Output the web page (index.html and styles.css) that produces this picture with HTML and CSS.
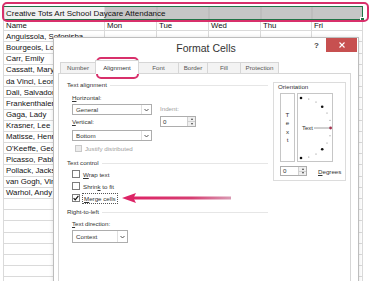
FILE: index.html
```html
<!DOCTYPE html>
<html lang="en">
<head>
    <meta charset="UTF-8">
    <meta name="viewport" content="width=device-width, initial-scale=1.0">
    <title>Format Cells - Merge cells</title>
    <link rel="stylesheet" href="styles.css">
</head>
<body>
    <table class="sheet">
        <colgroup>
            <col class="col-name">
            <col class="col-day"><col class="col-day"><col class="col-day">
            <col class="col-day-s"><col class="col-day-s">
        </colgroup>
        <tr class="title-row">
            <td colspan="6" class="merged">Creative Tots Art School Daycare Attendance<span class="fill-handle"></span></td>
        </tr>
        <tr><td>Name</td><td>Mon</td><td>Tue</td><td>Wed</td><td>Thu</td><td>Fri</td></tr>
        <tr><td>Anguissola, Sofonisba</td><td></td><td></td><td></td><td></td><td></td></tr>
        <tr><td>Bourgeois, Louise</td><td></td><td></td><td></td><td></td><td></td></tr>
        <tr><td>Carr, Emily</td><td></td><td></td><td></td><td></td><td></td></tr>
        <tr><td>Cassatt, Mary</td><td></td><td></td><td></td><td></td><td></td></tr>
        <tr><td>da Vinci, Leonardo</td><td></td><td></td><td></td><td></td><td></td></tr>
        <tr><td>Dali, Salvador</td><td></td><td></td><td></td><td></td><td></td></tr>
        <tr><td>Frankenthaler, Helen</td><td></td><td></td><td></td><td></td><td></td></tr>
        <tr><td>Gaga, Lady</td><td></td><td></td><td></td><td></td><td></td></tr>
        <tr><td>Krasner, Lee</td><td></td><td></td><td></td><td></td><td></td></tr>
        <tr><td>Matisse, Henri</td><td></td><td></td><td></td><td></td><td></td></tr>
        <tr><td>O'Keeffe, Georgia</td><td></td><td></td><td></td><td></td><td></td></tr>
        <tr><td>Picasso, Pablo</td><td></td><td></td><td></td><td></td><td></td></tr>
        <tr><td>Pollack, Jackson</td><td></td><td></td><td></td><td></td><td></td></tr>
        <tr><td>van Gogh, Vincent</td><td></td><td></td><td></td><td></td><td></td></tr>
        <tr><td>Warhol, Andy</td><td></td><td></td><td></td><td></td><td></td></tr>
        <tr><td></td><td></td><td></td><td></td><td></td><td></td></tr>
        <tr><td></td><td></td><td></td><td></td><td></td><td></td></tr>
        <tr><td></td><td></td><td></td><td></td><td></td><td></td></tr>
        <tr><td></td><td></td><td></td><td></td><td></td><td></td></tr>
        <tr><td></td><td></td><td></td><td></td><td></td><td></td></tr>
        <tr><td></td><td></td><td></td><td></td><td></td><td></td></tr>
        <tr><td></td><td></td><td></td><td></td><td></td><td></td></tr>
        <tr><td></td><td></td><td></td><td></td><td></td><td></td></tr>
    </table>

    <div class="dialog">
        <div class="titlebar">
            <span></span>
            <h1 class="title">Format Cells</h1>
            <div class="win-btns">
                <span class="help">?</span>
                <span class="close">
                    <svg width="6" height="6" viewBox="0 0 6 6"><path d="M0.5 0.5 L5.5 5.5 M5.5 0.5 L0.5 5.5" stroke="#fff" stroke-width="1.1"/></svg>
                </span>
            </div>
        </div>

        <div class="tabs">
            <span class="tab tab-number">Number</span>
            <span class="tab tab-align active">Alignment</span>
            <span class="tab tab-font">Font</span>
            <span class="tab tab-border">Border</span>
            <span class="tab tab-fill">Fill</span>
            <span class="tab tab-protect">Protection</span>
        </div>

        <div class="panel">
            <div class="left-col">
                <div class="group-title">Text alignment</div>
                <div class="align-grid">
                    <div>
                        <div class="field-label first"><u>H</u>orizontal:</div>
                        <div class="select sel-general">
                            <span>General</span>
                            <i class="drop"><svg width="5" height="4" viewBox="0 0 5 4"><path d="M0.5 1 L2.5 3 L4.5 1" fill="none" stroke="#444" stroke-width="0.9"/></svg></i>
                        </div>
                        <div class="field-label vert"><u>V</u>ertical:</div>
                        <div class="select sel-bottom">
                            <span>Bottom</span>
                            <i class="drop"><svg width="5" height="4" viewBox="0 0 5 4"><path d="M0.5 1 L2.5 3 L4.5 1" fill="none" stroke="#444" stroke-width="0.9"/></svg></i>
                        </div>
                    </div>
                    <div>
                        <div class="field-label indent-label">Indent:</div>
                        <div class="num indent-num">
                            <span>0</span>
                            <i class="spin"><b class="up"></b><b class="down"></b></i>
                        </div>
                    </div>
                </div>
                <div class="check-row justify">
                    <span class="box disabled"></span>
                    <span class="muted">Justify distributed</span>
                </div>

                <div class="group-title tc">Text control</div>
                <div class="check-row">
                    <span class="box"></span>
                    <span><u>W</u>rap text</span>
                </div>
                <div class="check-row">
                    <span class="box"></span>
                    <span>Shrin<u>k</u> to fit</span>
                </div>
                <div class="check-row">
                    <span class="box">
                        <svg width="6" height="6" viewBox="0 0 6 6"><path d="M0.6 3.2 L2.2 4.8 L5.4 0.9" fill="none" stroke="#111" stroke-width="1.2"/></svg>
                    </span>
                    <span class="focus"><u>M</u>erge cells</span>
                </div>

                <div class="group-title rtl">Right-to-left</div>
                <div class="field-label dir-label"><u>T</u>ext direction:</div>
                <div class="select sel-context">
                    <span>Context</span>
                    <i class="drop"><svg width="5" height="4" viewBox="0 0 5 4"><path d="M0.5 1 L2.5 3 L4.5 1" fill="none" stroke="#444" stroke-width="0.9"/></svg></i>
                </div>
            </div>

            <div class="orient">
                <div class="orient-label">Orientation</div>
                <div class="dial-row">
                    <div class="vtext"><span>T</span><span>e</span><span>x</span><span>t</span></div>
                    <div class="dial">
                        <svg width="34" height="67" viewBox="0 0 34 67">
                            <g fill="#111">
                                <circle cx="3" cy="4" r="1.3"/>
                                <circle cx="24.2" cy="12.8" r="1.3"/>
                                <circle cx="24.2" cy="55.2" r="1.3"/>
                                <circle cx="3" cy="64" r="1.3"/>
                            </g>
                            <g fill="#666">
                                <circle cx="10.8" cy="5" r="0.5"/>
                                <circle cx="18" cy="8" r="0.5"/>
                                <circle cx="29" cy="19" r="0.5"/>
                                <circle cx="32" cy="26.2" r="0.5"/>
                                <circle cx="32" cy="41.8" r="0.5"/>
                                <circle cx="29" cy="49" r="0.5"/>
                                <circle cx="18" cy="60" r="0.5"/>
                                <circle cx="10.8" cy="63" r="0.5"/>
                            </g>
                            <text x="4" y="36.3" font-family="Liberation Sans, Arial, sans-serif" font-size="6" fill="#333">Text</text>
                            <line x1="16" y1="34" x2="32" y2="34" stroke="#888" stroke-width="0.8"/>
                            <circle cx="32.6" cy="34" r="1.4" fill="#a3334f"/>
                        </svg>
                    </div>
                </div>
                <div class="deg-row">
                    <div class="num deg-num">
                        <span>0</span>
                        <i class="spin"><b class="up"></b><b class="down"></b></i>
                    </div>
                    <span class="deg-label"><u>D</u>egrees</span>
                </div>
            </div>
        </div>
    </div>

    <div class="ring ring-title"></div>
    <div class="ring ring-tab"></div>

    <svg class="callout" width="110" height="12" viewBox="0 0 110 12">
        <defs>
            <linearGradient id="shaft" x1="0" x2="1" y1="0" y2="0">
                <stop offset="0" stop-color="#dd2466"/>
                <stop offset="0.6" stop-color="#d63e72"/>
                <stop offset="1" stop-color="#d99ab3"/>
            </linearGradient>
        </defs>
        <rect x="11" y="4.5" width="98" height="3" fill="url(#shaft)"/>
        <path d="M0 6 L14 1 L11.5 6 L14 11 Z" fill="#dd2466"/>
    </svg>
</body>
</html>
```

FILE: styles.css
```css
body {
    margin: 0;
    font-family: "Liberation Sans", Arial, sans-serif;
    background-color: #fff;
    position: relative;
    width: 375px;
    height: 281px;
    overflow: hidden;
}

/* spreadsheet */

.sheet {
    border-collapse: collapse;
    table-layout: fixed;
    width: 359px;
    margin: 6px 0 0 3px;
    font-size: 7.8px;
    color: #111;
}

.col-name { width: 101px; }
.col-day { width: 52px; }
.col-day-s { width: 51px; }

.sheet tr {
    height: 11.2px;
}

.sheet td {
    border: 1px solid #dadada;
    padding: 0 2px;
    line-height: 9px;
    white-space: nowrap;
    overflow: hidden;
}

.sheet .title-row {
    height: 13px;
}

.sheet td.merged {
    position: relative;
    overflow: visible;
    border: 1px solid #217346;
    font-size: 8px;
    color: #111;
    background:
        linear-gradient(to right, transparent 152px, #b4b4b4 152px, #b4b4b4 153px, transparent 153px),
        linear-gradient(to right, transparent 204px, #b4b4b4 204px, #b4b4b4 205px, transparent 205px),
        linear-gradient(to right, transparent 256px, #b4b4b4 256px, #b4b4b4 257px, transparent 257px),
        linear-gradient(to right, transparent 307px, #b4b4b4 307px, #b4b4b4 308px, transparent 308px),
        linear-gradient(to right, #f1f1f1 100px, #c6c6c6 100px);
}

.fill-handle {
    position: absolute;
    right: -3px;
    bottom: -3px;
    width: 3px;
    height: 3px;
    background-color: #217346;
    border: 1px solid #fff;
}

/* annotations */

.ring {
    position: absolute;
    box-sizing: border-box;
    border: 2px solid #d8306b;
    border-radius: 5px;
}

.ring-title {
    left: 2px;
    top: 2px;
    width: 367px;
    height: 20px;
}

.ring-tab {
    left: 96px;
    top: 57px;
    width: 43px;
    height: 22px;
}

.callout {
    position: absolute;
    left: 122px;
    top: 192px;
}

/* dialog */

.dialog {
    position: absolute;
    left: 53px;
    top: 37px;
    width: 306px;
    height: 260px;
    box-sizing: border-box;
    border: 1px solid #bdbdbd;
    background-color: #fff;
    box-shadow: 0 0 4px rgba(0,0,0,0.12);
}

.titlebar {
    display: grid;
    grid-template-columns: 1fr auto 1fr;
    height: 22px;
}

.title {
    margin: 0;
    font-size: 10.5px;
    font-weight: normal;
    line-height: 20px;
    color: #333;
}

.win-btns {
    justify-self: end;
    display: flex;
    align-items: center;
    gap: 7px;
    height: 14px;
    margin-right: 1px;
}

.help {
    font-size: 8px;
    font-weight: bold;
    color: #444;
}

.close {
    display: flex;
    align-items: center;
    justify-content: center;
    width: 31px;
    height: 14px;
    background-color: #c75050;
}

.tabs {
    display: flex;
    align-items: flex-end;
    height: 13px;
    margin-left: 6px;
}

.tab {
    box-sizing: border-box;
    height: 11px;
    margin-right: -1px;
    border: 1px solid #d6d6d6;
    border-bottom: none;
    background-color: #f3f3f3;
    font-size: 6.2px;
    line-height: 10px;
    text-align: center;
    color: #555;
}

.tab.active {
    position: relative;
    z-index: 1;
    height: 14px;
    margin-bottom: -1px;
    background-color: #fff;
    line-height: 13px;
    color: #333;
}

.tab-number { width: 36px; }
.tab-align { width: 44px; }
.tab-font { width: 41px; }
.tab-border { width: 30px; }
.tab-fill { width: 34px; }
.tab-protect { width: 39px; }

.panel {
    display: grid;
    grid-template-columns: 201px 73px;
    column-gap: 5px;
    align-items: start;
    box-sizing: border-box;
    width: 293px;
    height: 210px;
    margin-left: 4px;
    padding: 6px 3px 0 8px;
    border: 1px solid #d6d6d6;
    font-size: 6.2px;
    color: #333;
}

.panel u {
    text-decoration-thickness: 0.5px;
    text-underline-offset: 1px;
}

.group-title {
    display: flex;
    align-items: center;
    height: 10px;
    line-height: 10px;
}

.group-title::after {
    content: '';
    flex: 1;
    height: 1px;
    margin-left: 3px;
    background-color: #e6e6e6;
}

.group-title.tc { margin-top: 6px; }
.group-title.rtl { margin-top: 3px; }

.align-grid {
    display: grid;
    grid-template-columns: 80px 36px;
    column-gap: 8px;
    padding-left: 5px;
}

.field-label {
    height: 8px;
    line-height: 8px;
}

.field-label.first { margin-top: 4px; }
.field-label.vert { margin-top: 3px; }
.field-label.indent-label { margin-top: 15px; color: #a0a0a0; }
.field-label.dir-label { margin: 3px 0 0; padding-left: 5px; }

.select {
    display: flex;
    box-sizing: border-box;
    height: 11px;
    border: 1px solid #adadad;
    background-color: #fff;
}

.select span {
    flex: 1;
    padding-left: 3px;
    line-height: 9px;
}

.drop {
    display: flex;
    align-items: center;
    justify-content: center;
    width: 9px;
    border-left: 1px solid #e0e0e0;
}

.sel-general { margin-top: 2px; }
.sel-bottom { margin-top: 4px; }

.sel-context {
    width: 56px;
    height: 13px;
    margin: 2px 0 0 5px;
}

.sel-context span {
    line-height: 11px;
}

.num {
    display: flex;
    box-sizing: border-box;
    border: 1px solid #adadad;
    background-color: #fff;
}

.num span {
    flex: 1;
    padding-left: 2px;
}

.indent-num {
    height: 11px;
    margin-top: 3px;
    line-height: 9px;
}

.spin {
    display: flex;
    flex-direction: column;
    width: 7px;
    border-left: 1px solid #d0d0d0;
    background-color: #efefef;
}

.spin b {
    flex: 1;
    display: flex;
    align-items: center;
    justify-content: center;
}

.spin .up { border-bottom: 1px solid #d0d0d0; }

.spin .up::before {
    content: '';
    border-left: 1.5px solid transparent;
    border-right: 1.5px solid transparent;
    border-bottom: 2px solid #444;
}

.spin .down::before {
    content: '';
    border-left: 1.5px solid transparent;
    border-right: 1.5px solid transparent;
    border-top: 2px solid #444;
}

.check-row {
    display: flex;
    align-items: center;
    height: 12px;
    padding-left: 5px;
}

.check-row.justify {
    height: 8px;
    margin-top: 3px;
    padding-left: 8px;
}

.box {
    display: flex;
    align-items: center;
    justify-content: center;
    box-sizing: border-box;
    width: 8px;
    height: 8px;
    margin-right: 3px;
    border: 1px solid #7d7d7d;
    background-color: #fff;
}

.box.disabled {
    width: 7px;
    height: 7px;
    border-color: #c9c9c9;
    background-color: #ececec;
}

.muted { color: #a0a0a0; }

.focus {
    margin-left: -1px;
    padding: 0 1px;
    border: 1px dotted #555;
    line-height: 9px;
}

/* orientation box */

.orient {
    box-sizing: border-box;
    height: 99px;
    margin-top: 2px;
    border: 1px solid #dcdcdc;
}

.orient-label {
    padding-left: 4px;
    line-height: 7px;
}

.dial-row {
    display: flex;
    gap: 2px;
    margin: 3px 0 0 6px;
}

.vtext {
    display: flex;
    flex-direction: column;
    align-items: center;
    justify-content: center;
    box-sizing: border-box;
    width: 15px;
    height: 69px;
    border: 1px solid #c6c6c6;
    line-height: 8.5px;
}

.dial {
    box-sizing: border-box;
    width: 36px;
    height: 69px;
    border: 1px solid #c6c6c6;
}

.dial svg {
    display: block;
}

.deg-row {
    display: flex;
    align-items: center;
    height: 10px;
    margin: 4px 0 0 6px;
}

.deg-num {
    width: 27px;
    height: 10px;
    line-height: 8px;
}

.deg-label {
    margin-left: 11px;
}
```
